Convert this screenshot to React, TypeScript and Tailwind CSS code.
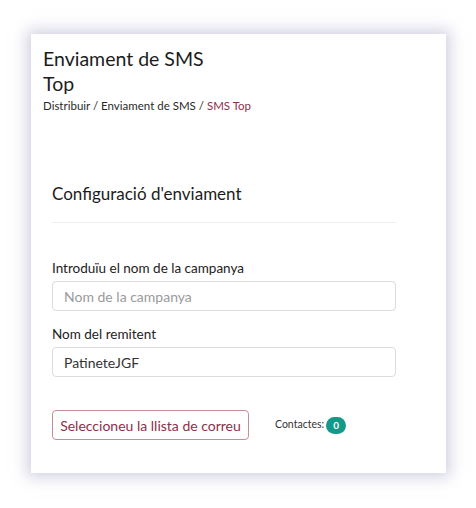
export default function App() {
  return (
    <div className="h-[508px] w-[476px] bg-white pl-[31px] pt-[34px] font-['Lato',sans-serif] text-[#222]">
      <div className="h-[439px] w-[415px] bg-white shadow-[0_0_14px_4px_rgba(170,170,200,0.55)]">
        {/* Page header */}
        <div className="pl-[12px] pt-[12px]">
          <h1 className="text-[19.5px] leading-[25px] font-normal text-[#1c1c1c]">
            <span className="block">Enviament de SMS</span>
            <span className="block">Top</span>
          </h1>
          <div className="mt-[2px] text-[11.5px] leading-[16px] text-[#2a2a2a]">
            Distribuir / Enviament de SMS / <span className="text-[#8e2f4a]">SMS Top</span>
          </div>
        </div>

        {/* Form */}
        <div className="ml-[21px] mt-[68px] w-[344px]">
          <h2 className="text-[17px] leading-[24px] font-normal text-[#1c1c1c]">Configuració d'enviament</h2>
          <div className="mt-[16px] border-t border-[#eeeeee]" />

          <label className="mt-[36px] block text-[13.5px] leading-[18px] text-[#222]">
            Introduïu el nom de la campanya
          </label>
          <input
            className="mt-[4px] block h-[30px] w-full rounded-[4px] border border-[#dcdcdc] px-[11px] text-[14px] text-[#333] placeholder:text-[#9a9a9a] outline-none"
            placeholder="Nom de la campanya"
          />

          <label className="mt-[14px] block text-[13.5px] leading-[18px] text-[#222]">Nom del remitent</label>
          <input
            className="mt-[4px] block h-[30px] w-full rounded-[4px] border border-[#dcdcdc] px-[11px] text-[14px] text-[#333] outline-none"
            defaultValue="PatineteJGF"
          />

          <div className="mt-[33px] flex items-center">
            <button className="h-[30px] w-[197px] rounded-[4px] border border-[#c98c99] text-[14px] text-[#8e2f4a]">
              Seleccioneu la llista de correu
            </button>
            <span className="ml-[26px] text-[10.5px] text-[#333]">Contactes:</span>
            <span className="ml-[2px] flex h-[17px] w-[20px] items-center justify-center rounded-full bg-[#13998a] text-[10px] font-bold text-white">
              0
            </span>
          </div>
        </div>
      </div>
    </div>
  );
}
